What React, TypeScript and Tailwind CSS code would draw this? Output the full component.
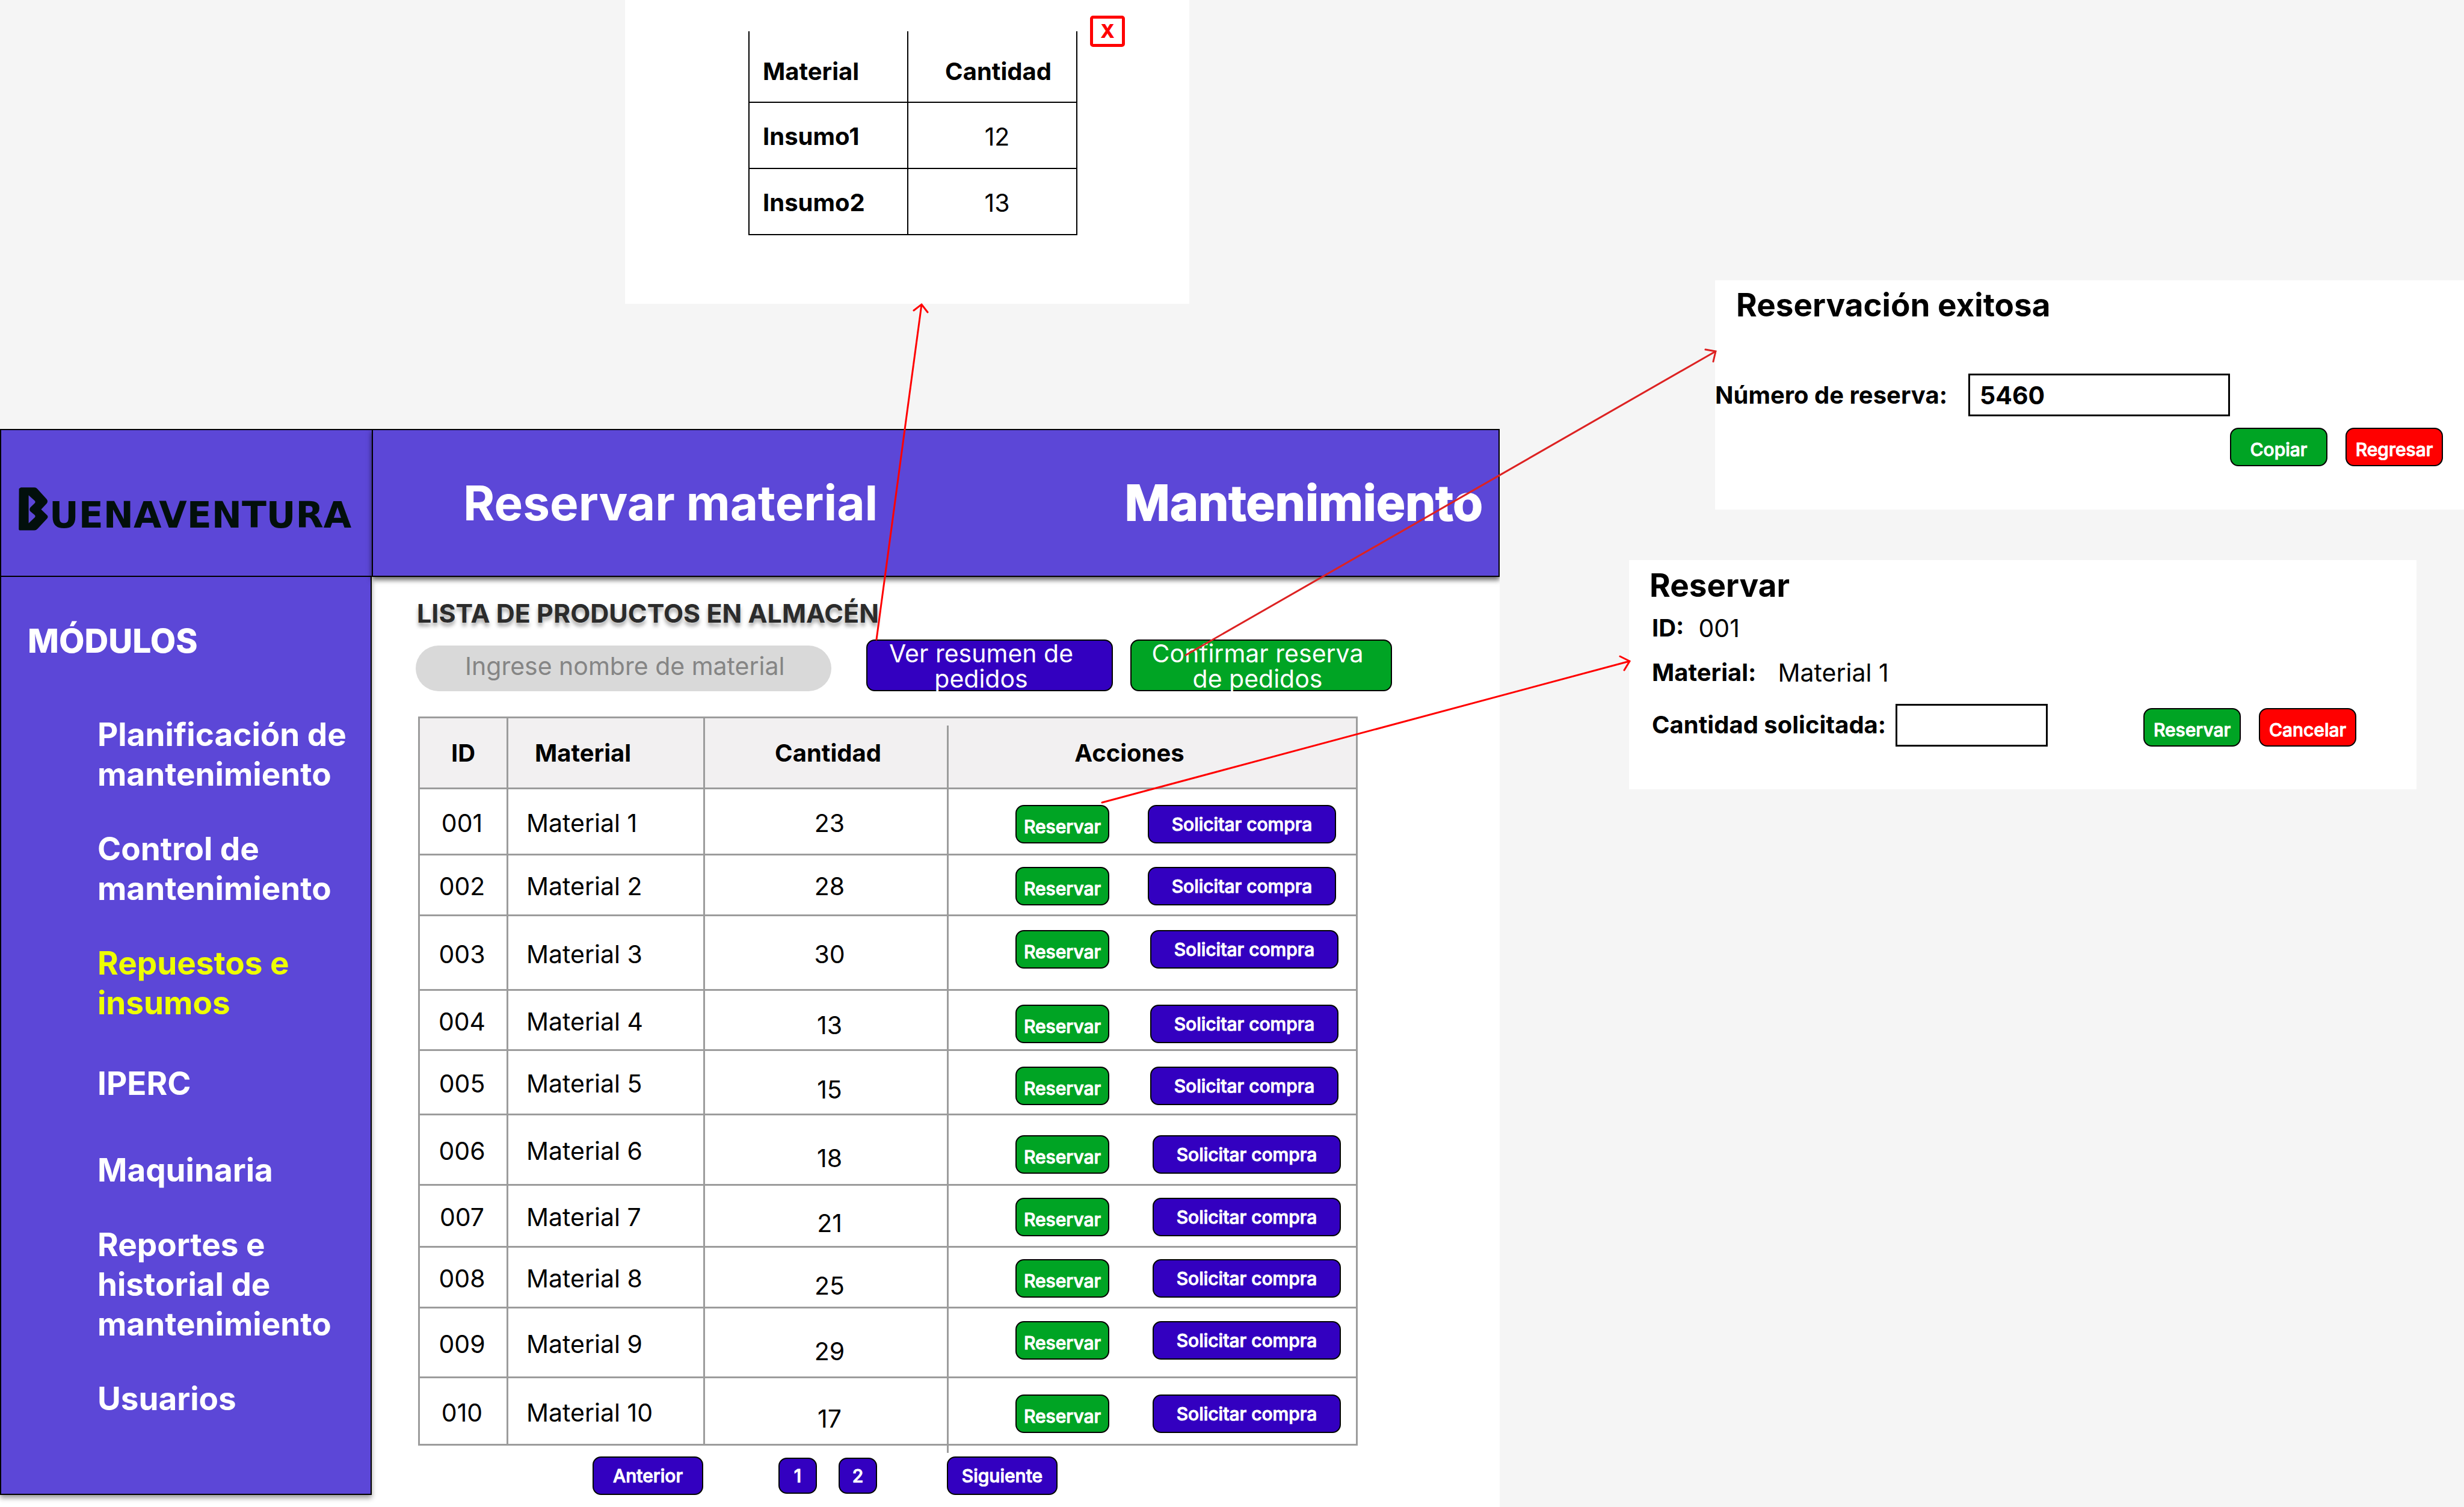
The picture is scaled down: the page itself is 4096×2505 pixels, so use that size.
import React from "react";

type Row = {
  id: string;
  name: string;
  qty: number;
  height: string;
  qtyPad: string;
  actionPad: string;
};

const ROWS: Row[] = [
  { id: "001", name: "Material 1", qty: 23, height: "h-[110px]", qtyPad: "pt-1", actionPad: "pt-2 gap-16" },
  { id: "002", name: "Material 2", qty: 28, height: "h-[101px]", qtyPad: "pt-1", actionPad: "pt-1 gap-16" },
  { id: "003", name: "Material 3", qty: 30, height: "h-[124px]", qtyPad: "pt-1", actionPad: "pb-3 gap-17" },
  { id: "004", name: "Material 4", qty: 13, height: "h-[100px]", qtyPad: "pt-4", actionPad: "pt-3 gap-17" },
  { id: "005", name: "Material 5", qty: 15, height: "h-[107px]", qtyPad: "pt-6", actionPad: "pt-3 gap-17" },
  { id: "006", name: "Material 6", qty: 18, height: "h-[117px]", qtyPad: "pt-7", actionPad: "pt-4 gap-18" },
  { id: "007", name: "Material 7", qty: 21, height: "h-[103px]", qtyPad: "pt-6", actionPad: "pt-1 gap-18" },
  { id: "008", name: "Material 8", qty: 25, height: "h-[101px]", qtyPad: "pt-7", actionPad: "pt-1 gap-18" },
  { id: "009", name: "Material 9", qty: 29, height: "h-[116px]", qtyPad: "pt-7", actionPad: "pb-2 gap-18" },
  { id: "010", name: "Material 10", qty: 17, height: "h-[112px]", qtyPad: "pt-6", actionPad: "pt-2 gap-18" },
];

const MODULES = [
  { label: "Planificación de mantenimiento", style: "text-white" },
  { label: "Control de mantenimiento", style: "text-white" },
  { label: "Repuestos e insumos", style: "text-[#eeff00]" },
  { label: "IPERC", style: "text-white mt-[10px]" },
  { label: "Maquinaria", style: "text-white mt-5" },
  { label: "Reportes e historial de mantenimiento", style: "text-white" },
  { label: "Usuarios", style: "text-white" },
];

const BUTTON =
  "shrink-0 rounded-[14px] border-2 border-black text-white text-[30px] leading-[38px] font-medium [-webkit-text-stroke:1px_white]";

function SmallButton({ tone, children }: { tone: "green" | "red"; children: React.ReactNode }) {
  const color = tone === "green" ? "bg-[#00a424]" : "bg-[#ff0000]";
  return <button className={`${BUTTON} ${color} h-16 w-[156px] pt-2`}>{children}</button>;
}

function PurpleButton({ size, children }: { size: string; children: React.ReactNode }) {
  return <button className={`${BUTTON} ${size} bg-[#3300c0]`}>{children}</button>;
}

function Logo() {
  return (
    <div className="flex items-end pl-7 text-[#020f0c]">
      <svg width="52" height="74" viewBox="76 102 130 258" preserveAspectRatio="none" fill="currentColor" aria-hidden="true">
        <path
          fillRule="evenodd"
          d="M80 113 L88 106 H144 Q151 106 156 114 L195 174 Q202 186 195 200 L172 234 L197 268 Q203 277 196 288 L157 346 Q151 355 144 355 H82 L79 350 Z M120 152 V314 L145 281 Q150 273 145 266 L127 245 Q121 234 127 222 L145 198 Q150 190 145 183 Z"
        />
      </svg>
      <span className="font-['DejaVu_Sans',sans-serif] text-[60px] leading-[54px] font-bold">UENAVENTURA</span>
    </div>
  );
}

function SummaryPanel() {
  const names = ["Insumo1", "Insumo2"];
  const amounts = [12, 13];
  return (
    <section className="mr-[516px] ml-[1039px] flex h-[505px] items-start bg-white pt-[26px] pl-[205px]">
      <table className="mt-[26px] w-[547px] table-fixed border-separate border-spacing-0 border-x-2 border-black text-[41px] leading-[50px]">
        <thead>
          <tr className="h-[119px]">
            <th className="w-[264px] border-r-2 border-b-2 border-black pt-4 pl-[22px] text-left text-[40px] font-bold">Material</th>
            <th className="border-b-2 border-black pt-4 pl-5 text-center text-[40px] font-bold">Cantidad</th>
          </tr>
        </thead>
        <tbody>
          {names.map((name, i) => (
            <tr key={name} className="h-[110px]">
              <th scope="row" className="border-r-2 border-b-2 border-black pt-1 pl-[22px] text-left text-[40px] font-bold">
                {name}
              </th>
              <td className="border-b-2 border-black pt-1 pl-4 text-center">{amounts[i]}</td>
            </tr>
          ))}
        </tbody>
      </table>
      <button
        aria-label="Cerrar"
        className="ml-[21px] h-[52px] w-[58px] rounded-[5px] border-[5px] border-[#ff0000] text-[31px] leading-[40px] font-extrabold text-[#ff0000]"
      >
        X
      </button>
    </section>
  );
}

function ProductTable() {
  return (
    <table className="mt-[42px] ml-1 w-[1562px] table-fixed border-separate border-spacing-0 border-t-3 border-l-3 border-[#9c9c9c] text-[41px] leading-[50px]">
      <thead className="text-[40px]">
        <tr className="h-[118px] bg-[#f2f0f1]">
          <th className="w-[147px] border-r-3 border-b-3 border-[#9c9c9c] text-center font-bold">ID</th>
          <th className="w-[327px] border-r-3 border-b-3 border-[#9c9c9c] pl-11 text-left font-bold">Material</th>
          <th className="w-[405px] border-b-3 border-[#9c9c9c] pl-1 text-center font-bold">Cantidad</th>
          <th className="relative border-r-3 border-b-3 border-[#9c9c9c] pr-[76px] text-center font-bold before:absolute before:top-3 before:-bottom-[3px] before:-left-[3px] before:w-[3px] before:bg-[#9c9c9c]">
            Acciones
          </th>
        </tr>
      </thead>
      <tbody>
        {ROWS.map((row) => (
          <tr key={row.id} className={`${row.height} group`}>
            <td className="border-r-3 border-b-3 border-[#9c9c9c] pt-1 pr-1 text-center">{row.id}</td>
            <td className="border-r-3 border-b-3 border-[#9c9c9c] pt-1 pl-[30px]">{row.name}</td>
            <td className={`${row.qtyPad} border-r-3 border-b-3 border-[#9c9c9c] pl-3 text-center`}>{row.qty}</td>
            <td className="relative border-r-3 border-b-3 border-[#9c9c9c] pl-[111px] group-last:before:absolute group-last:before:top-full group-last:before:-left-[3px] group-last:before:h-[15px] group-last:before:w-[3px] group-last:before:bg-[#9c9c9c]">
              <div className={`${row.actionPad} flex`}>
                <SmallButton tone="green">Reservar</SmallButton>
                <PurpleButton size="h-16 w-[313px]">Solicitar compra</PurpleButton>
              </div>
            </td>
          </tr>
        ))}
      </tbody>
    </table>
  );
}

function StockScreen() {
  return (
    <section className="mt-[208px] grid grow grid-cols-[618px_1fr] grid-rows-[246px_1fr] overflow-hidden bg-white">
      <div className="z-10 flex items-center border-2 border-r-0 border-black bg-[#5c47d7] pt-[19px]">
        <Logo />
      </div>
      <header className="z-10 flex items-center justify-between border-2 border-black bg-[#5c47d7] pr-[26px] pl-[150px] text-white shadow-[0_5px_8px_rgba(0,0,0,0.6)]">
        <h1 className="text-[80px] leading-[100px] font-bold">Reservar material</h1>
        <p className="text-[81px] leading-[100px] font-bold [-webkit-text-stroke:2px_white]">Mantenimiento</p>
      </header>

      <nav className="mb-5 flex flex-col border-2 border-t-0 border-black bg-[#5c47d7] shadow-[0_5px_8px_rgba(0,0,0,0.4)]">
        <h2 className="mt-[73px] pl-11 text-[55px] leading-[66px] font-extrabold text-white">MÓDULOS</h2>
        <ul className="mt-[90px] flex flex-col gap-[58px] pl-40">
          {MODULES.map((item) => (
            <li key={item.label} className={`${item.style} text-[53px] leading-[66px] font-bold`}>
              <a href="#" className="block">
                {item.label}
              </a>
            </li>
          ))}
        </ul>
      </nav>

      <main className="pt-[33px] pb-5 pl-[73px]">
        <h2 className="pl-0.5 text-[43px] leading-[54px] font-bold text-[#2b2b2b] [text-shadow:0_6px_6px_rgba(0,0,0,0.35)]">
          LISTA DE PRODUCTOS EN ALMACÉN
        </h2>
        <div className="mt-[17px] flex items-end">
          <input
            type="search"
            aria-label="Ingrese nombre de material"
            placeholder="Ingrese nombre de material"
            className="h-[76px] w-[691px] rounded-full bg-[#d9d9d9] pb-2 pl-[82px] text-[41px] leading-[50px] text-black placeholder:text-[#858585]"
          />
          <button className="ml-[58px] h-[86px] w-[410px] rounded-[14px] border-2 border-black bg-[#3300c0] pr-11 pl-4 text-[41px] leading-[42px] text-white">
            Ver resumen de pedidos
          </button>
          <button className="ml-[29px] h-[86px] w-[435px] rounded-[14px] border-2 border-black bg-[#00a424] pr-9 pl-6 text-[41px] leading-[42px] text-white">
            Confirmar reserva de pedidos
          </button>
        </div>
        <ProductTable />
        <div className="mt-[18px] flex items-center pl-[294px]">
          <PurpleButton size="h-16 w-[184px]">Anterior</PurpleButton>
          <div className="mr-[116px] ml-[125px] flex gap-9">
            <PurpleButton size="h-[60px] w-16">1</PurpleButton>
            <PurpleButton size="h-[60px] w-16">2</PurpleButton>
          </div>
          <PurpleButton size="h-16 w-[184px]">Siguiente</PurpleButton>
        </div>
      </main>
    </section>
  );
}

function SuccessDialog() {
  return (
    <section className="mt-[466px] ml-[358px] h-[381px] bg-white text-black">
      <h2 className="pt-2 pl-[35px] text-[53px] leading-[66px] font-bold">Reservación exitosa</h2>
      <div className="mt-[81px] flex items-center">
        <label htmlFor="reservation" className="w-[421px] text-[40px] leading-[50px] font-bold">
          Número de reserva:
        </label>
        <input
          id="reservation"
          defaultValue="5460"
          className="h-[71px] w-[435px] border-3 border-black pl-4 text-[41px] leading-[50px] font-bold"
        />
      </div>
      <div className="mt-[19px] flex justify-end gap-[30px] pr-[35px]">
        <button className={`${BUTTON} h-16 w-[162px] bg-[#00a424] pt-2`}>Copiar</button>
        <button className={`${BUTTON} h-16 w-[162px] bg-[#ff0000] pt-2`}>Regresar</button>
      </div>
    </section>
  );
}

function ReserveDialog() {
  return (
    <section className="mt-[84px] mr-[79px] ml-[215px] h-[381px] bg-white pl-[34px] text-[41px] leading-[50px] text-black">
      <h2 className="pt-[9px] text-[53px] leading-[66px] font-bold">Reservar</h2>
      <dl className="pl-1">
        <div className="mt-[13px] flex gap-6">
          <dt className="text-[40px] font-bold">ID:</dt>
          <dd>001</dd>
        </div>
        <div className="mt-6 flex gap-9">
          <dt className="text-[40px] font-bold">Material:</dt>
          <dd>Material 1</dd>
        </div>
      </dl>
      <div className="mt-[26px] flex items-center pl-1">
        <label htmlFor="amount" className="w-[405px] text-[40px] leading-[50px] font-bold whitespace-nowrap">
          Cantidad solicitada:
        </label>
        <input id="amount" className="h-[71px] w-[253px] border-3 border-black px-4" />
        <div className="mt-2 ml-[159px] flex gap-[30px]">
          <button className={`${BUTTON} h-16 w-[162px] bg-[#00a424] pt-2`}>Reservar</button>
          <button className={`${BUTTON} h-16 w-[162px] bg-[#ff0000] pt-2`}>Cancelar</button>
        </div>
      </div>
    </section>
  );
}

function Arrows() {
  return (
    <svg
      className="pointer-events-none absolute inset-0 z-20 size-full"
      viewBox="0 0 4096 2505"
      preserveAspectRatio="none"
      fill="none"
      strokeWidth="3"
      strokeLinecap="round"
      aria-hidden="true"
    >
      <path stroke="#ff0000" d="M1457 1063 L1532 506 M1519 516 L1532 506 L1542 519" />
      <path stroke="#dd2222" d="M1971 1089 L2852 584 M2835 581 L2852 584 L2848 601" />
      <path stroke="#ff0000" d="M1832 1334 L2709 1099 M2693 1091 L2709 1099 L2700 1114" />
    </svg>
  );
}

export default function App() {
  return (
    <div className="relative grid min-h-screen grid-cols-[2493fr_1603fr] bg-[#f5f5f5] font-[Inter,sans-serif] text-black">
      <div className="flex flex-col">
        <SummaryPanel />
        <StockScreen />
      </div>
      <div>
        <SuccessDialog />
        <ReserveDialog />
      </div>
      <Arrows />
    </div>
  );
}
